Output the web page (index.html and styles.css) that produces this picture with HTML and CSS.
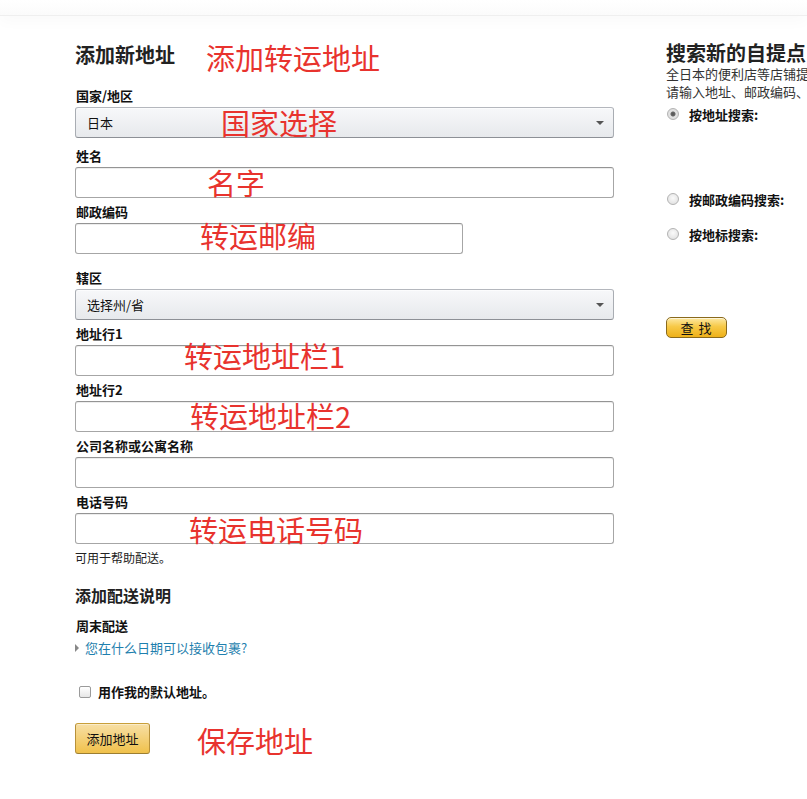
FILE: index.html
```html
<!DOCTYPE html>
<html lang="zh-CN">
<head>
    <meta charset="UTF-8">
    <title>添加新地址</title>
    <link rel="stylesheet" href="styles.css">
</head>
<body>
<div class="page">
    <div class="top-strip"></div>

    <div class="main">
        <!-- 左侧：地址表单 -->
        <form class="address-form">
            <h1 class="form-title">添加新地址</h1>

            <div class="field field-country">
                <label class="field-label">国家/地区</label>
                <div class="select-box"><span>日本</span><i class="caret"></i></div>
            </div>

            <div class="field">
                <label class="field-label">姓名</label>
                <input class="text-input" type="text">
            </div>

            <div class="field field-postal">
                <label class="field-label">邮政编码</label>
                <input class="text-input short" type="text">
            </div>

            <div class="field">
                <label class="field-label">辖区</label>
                <div class="select-box"><span>选择州/省</span><i class="caret"></i></div>
            </div>

            <div class="field">
                <label class="field-label">地址行1</label>
                <input class="text-input" type="text">
            </div>

            <div class="field">
                <label class="field-label">地址行2</label>
                <input class="text-input" type="text">
            </div>

            <div class="field">
                <label class="field-label">公司名称或公寓名称</label>
                <input class="text-input" type="text">
            </div>

            <div class="field field-phone">
                <label class="field-label">电话号码</label>
                <input class="text-input" type="text">
            </div>
            <p class="hint">可用于帮助配送。</p>

            <h2 class="section-title">添加配送说明</h2>
            <div class="sub-title">周末配送</div>
            <a class="expander" href="#"><i class="expander-arrow"></i>您在什么日期可以接收包裹?</a>

            <label class="default-check">
                <input type="checkbox">
                <span>用作我的默认地址。</span>
            </label>

            <button class="add-button" type="button">添加地址</button>
        </form>

        <!-- 右侧：自提点搜索 -->
        <div class="pickup">
            <h2 class="pickup-title">搜索新的自提点</h2>
            <p class="pickup-desc first">全日本的便利店等店铺提供取货服务，可选择离您最近的店铺。</p>
            <p class="pickup-desc">请输入地址、邮政编码、地标进行搜索。</p>

            <label class="radio-row first"><input type="radio" name="search" checked><span>按地址搜索:</span></label>
            <label class="radio-row second"><input type="radio" name="search"><span>按邮政编码搜索:</span></label>
            <label class="radio-row"><input type="radio" name="search"><span>按地标搜索:</span></label>

            <button class="find-button" type="button">查 找</button>
        </div>
    </div>

    <!-- 红色标注 -->
    <span class="note" style="left: 206px; top: 41px;">添加转运地址</span>
    <span class="note" style="left: 221px; top: 106px;">国家选择</span>
    <span class="note" style="left: 207px; top: 166px;">名字</span>
    <span class="note" style="left: 200px; top: 219px;">转运邮编</span>
    <span class="note" style="left: 184px; top: 339px;">转运地址栏1</span>
    <span class="note" style="left: 190px; top: 399px;">转运地址栏2</span>
    <span class="note" style="left: 189px; top: 513px;">转运电话号码</span>
    <span class="note" style="left: 197px; top: 724px;">保存地址</span>
</div>
</body>
</html>
```

FILE: styles.css
```css
html, body {
    margin: 0;
    padding: 0;
    overflow: hidden;
    background: #fff;
}

body {
    font-family: "Noto Sans CJK SC", "Liberation Sans", sans-serif;
    font-size: 13px;
    color: #111;
}

.page {
    position: relative;
    width: 807px;
    height: 799px;
    overflow: hidden;
}

.top-strip {
    height: 15px;
    border-bottom: 1px solid #efefef;
    background: linear-gradient(180deg, #fff 0%, #fbfbfb 100%);
    box-shadow: 0 6px 14px rgba(0, 0, 0, 0.025);
}

.main {
    display: flex;
    padding: 27px 0 0 75px;
}

/* 左侧表单 */
.address-form {
    width: 539px;
    flex: none;
    margin: 0;
}

.form-title {
    margin: 0 0 21px;
    font-size: 20px;
    line-height: 24px;
    font-weight: 700;
    color: #222;
}

.field {
    margin-bottom: 6px;
}

.field-country {
    margin-bottom: 10px;
}

.field-postal {
    margin-bottom: 16px;
}

.field-label {
    display: block;
    font-size: 13px;
    line-height: 16px;
    font-weight: 700;
    color: #111;
    margin: 0 0 3px 1px;
}

.text-input {
    display: block;
    box-sizing: border-box;
    width: 539px;
    height: 31px;
    margin: 0;
    padding: 3px 7px;
    border: 1px solid #a6a6a6;
    border-top-color: #949494;
    border-radius: 3px;
    background: #fff;
    box-shadow: 0 1px 0 rgba(255, 255, 255, 0.5), 0 1px 0 rgba(0, 0, 0, 0.07) inset;
    font: inherit;
}

.text-input.short {
    width: 388px;
}

.select-box {
    position: relative;
    box-sizing: border-box;
    width: 539px;
    height: 31px;
    padding: 0 11px;
    display: flex;
    align-items: center;
    border: 1px solid #adb1b8;
    border-color: #b4b7bd #a9adb3 #8d9096;
    border-radius: 3px;
    background: linear-gradient(180deg, #f7f8fa 0%, #e7e9ec 100%);
    box-shadow: 0 1px 0 rgba(255, 255, 255, 0.6) inset;
    font-size: 13px;
    color: #111;
}

.caret {
    position: absolute;
    right: 9px;
    top: 13px;
    width: 0;
    height: 0;
    border-left: 4px solid transparent;
    border-right: 4px solid transparent;
    border-top: 4px solid #555;
}

.hint {
    margin: 0;
    font-size: 12px;
    line-height: 15px;
    color: #222;
}

.section-title {
    margin: 20px 0 13px;
    font-size: 16px;
    line-height: 20px;
    font-weight: 700;
    color: #222;
}

.sub-title {
    font-size: 13px;
    line-height: 16px;
    font-weight: 700;
    color: #111;
    margin-left: 1px;
}

.expander {
    display: flex;
    align-items: center;
    margin-top: 6px;
    font-size: 13px;
    line-height: 16px;
    color: #1f7fae;
    text-decoration: none;
}

.expander-arrow {
    width: 0;
    height: 0;
    margin: 0 6px 0 0;
    border-top: 4px solid transparent;
    border-bottom: 4px solid transparent;
    border-left: 4px solid #888;
}

.default-check {
    display: flex;
    align-items: center;
    gap: 7px;
    margin: 28px 0 0 4px;
    font-size: 13px;
    line-height: 16px;
    font-weight: 700;
    color: #111;
}

.default-check input {
    appearance: none;
    margin: 0;
    width: 12px;
    height: 12px;
    border: 1px solid #9a9a9a;
    border-radius: 2px;
    background: linear-gradient(180deg, #fff 0%, #e6e6e6 100%);
}

.add-button {
    display: block;
    margin-top: 23px;
    width: 75px;
    height: 31px;
    padding: 0;
    border: 1px solid #a88734;
    border-color: #c89f3a #b7913a #9c7e31;
    border-radius: 3px;
    background: linear-gradient(180deg, #f7dfa5 0%, #f0c14b 100%);
    box-shadow: 0 1px 0 rgba(255, 255, 255, 0.4) inset;
    font-family: inherit;
    font-size: 13px;
    color: #111;
}

/* 右侧自提点 */
.pickup {
    flex: none;
    margin-left: 52px;
    margin-top: -1px;
    white-space: nowrap;
}

.pickup-title {
    margin: 0;
    font-size: 20px;
    line-height: 22px;
    font-weight: 700;
    color: #222;
}

.pickup-desc {
    margin: 0;
    font-size: 13px;
    line-height: 18px;
    color: #333;
}

.pickup-desc.first {
    margin-top: 1px;
}

.radio-row {
    display: flex;
    align-items: center;
    gap: 10px;
    height: 18px;
    margin-top: 17px;
    font-size: 13px;
    font-weight: 700;
    color: #111;
}

.radio-row.first {
    margin-top: 4px;
}

.radio-row.second {
    margin-top: 67px;
}

.radio-row input {
    appearance: none;
    margin: 0 0 0 1px;
    width: 12px;
    height: 12px;
    border: 1px solid #b3b3b3;
    border-radius: 50%;
    background: radial-gradient(circle at 50% 40%, #fafafa 0%, #dcdcdc 100%);
}

.radio-row input:checked {
    background: radial-gradient(circle, #555 0, #666 2px, #e4e4e4 3px, #d6d6d6 100%);
}

.find-button {
    display: block;
    margin-top: 74px;
    width: 61px;
    height: 21px;
    padding: 0;
    border: 1px solid #8a6a1d;
    border-radius: 5px;
    background: linear-gradient(180deg, #fde9a3 0%, #f7c947 45%, #eeb119 100%);
    box-shadow: 0 1px 0 rgba(255, 255, 255, 0.6) inset;
    font-family: inherit;
    font-size: 13px;
    line-height: 19px;
    color: #111;
    letter-spacing: 1px;
}

/* 红色标注 */
.note {
    position: absolute;
    font-size: 29px;
    line-height: 33px;
    color: #e8332e;
    white-space: nowrap;
}
```
